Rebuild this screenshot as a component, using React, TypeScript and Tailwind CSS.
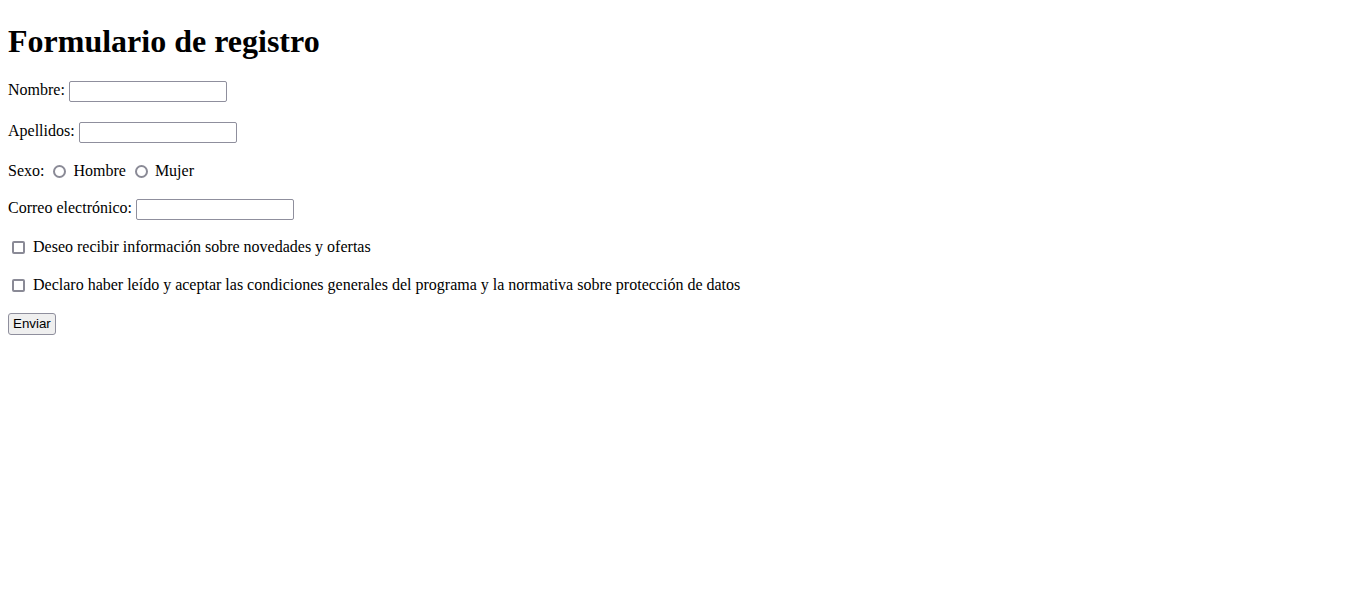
export default function App() {
  const textInput =
    'w-[158px] h-[21px] border border-[#8f8f9d] rounded-[2px] px-[2px] py-[1px] align-middle text-[13.33px] font-["Liberation_Sans",Arial,sans-serif] bg-white'
  const radio =
    'appearance-none ml-[5px] mr-[3px] align-[-2px] w-[13px] h-[13px] rounded-full border-2 border-[#8a8a96] bg-white'
  const checkbox =
    'appearance-none ml-1 mr-[3px] w-[13px] h-[13px] rounded-[2px] border-2 border-[#8a8a96] bg-white shrink-0'

  return (
    <div className="min-h-screen bg-white px-2 pt-px text-base text-black font-['Liberation_Serif','Times_New_Roman',serif]">
      <h1 className="mt-[16px] mb-0 text-[32px] font-bold leading-normal">Formulario de registro</h1>
      <form onSubmit={(e) => e.preventDefault()}>
        <p className="mt-[13px]">
          <label htmlFor="nombre">Nombre:</label> <input id="nombre" type="text" className={textInput} />
        </p>
        <p className="mt-[17px]">
          <label htmlFor="apellidos">Apellidos:</label> <input id="apellidos" type="text" className={textInput} />
        </p>
        <p className="mt-4">
          Sexo:{' '}
          <input type="radio" name="sexo" id="hombre" className={radio} />
          <label htmlFor="hombre"> Hombre</label>{' '}
          <input type="radio" name="sexo" id="mujer" className={radio} />
          <label htmlFor="mujer"> Mujer</label>
        </p>
        <p className="mt-[13px]">
          <label htmlFor="correo">Correo electrónico:</label> <input id="correo" type="email" className={textInput} />
        </p>
        <p className="mt-4 flex items-center h-[22px]">
          <input type="checkbox" id="novedades" className={checkbox} />
          <label htmlFor="novedades" className="ml-[5px]">Deseo recibir información sobre novedades y ofertas</label>
        </p>
        <p className="mt-4 mb-[15px] flex items-center h-[22px]">
          <input type="checkbox" id="condiciones" className={checkbox} />
          <label htmlFor="condiciones" className="ml-[5px]">
            Declaro haber leído y aceptar las condiciones generales del programa y la normativa sobre protección de datos
          </label>
        </p>
        <button
          type="submit"
          className="h-[22px] px-[4px] border border-[#8f8f9d] rounded-[3px] bg-[#efefef] text-[13.33px] font-['Liberation_Sans',Arial,sans-serif] leading-none"
        >
          Enviar
        </button>
      </form>
    </div>
  )
}
